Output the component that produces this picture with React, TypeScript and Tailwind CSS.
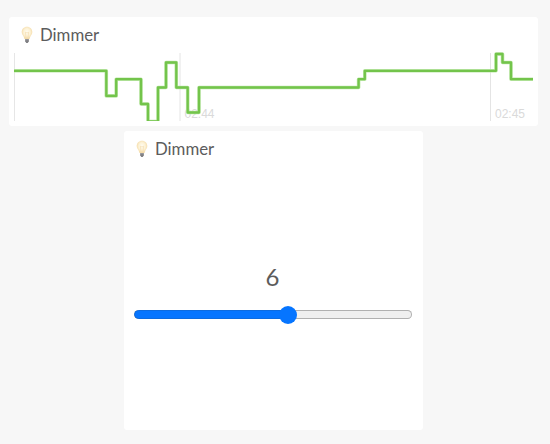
import { useState } from 'react'

// Step line of the dimmer level over time
const LEVEL_PATH =
  'M14 70.8H106.3V95.9H116.2V79.2H141V104H148V121.5H158V87.5H166V62.5H176.3V87.5H187.7V112.5H199V87.5H358.6V79.2H364.8V70.8H496V54H502.5V62.5H511V79.2H533'

const TICKS = [
  { x: 180, label: '02:44' },
  { x: 490.5, label: '02:45' },
]

function Bulb() {
  return (
    <svg className="h-[18px] w-[12px] shrink-0" viewBox="0 0 12 18">
      <defs>
        <radialGradient id="glow" cx="50%" cy="45%" r="55%">
          <stop offset="0" stopColor="#fffdf2" />
          <stop offset="0.55" stopColor="#fdf2d6" />
          <stop offset="1" stopColor="#f3d9a4" />
        </radialGradient>
      </defs>
      <path d="M6 .7C2.9.7.7 3 .7 5.9c0 2.3 1.4 3.4 2.1 5 .4.8.5 1.6.8 2.1h4.8c.3-.5.4-1.3.8-2.1.7-1.6 2.1-2.7 2.1-5C11.3 3 9.1.7 6 .7Z" fill="url(#glow)" />
      <path d="M4.4 6.2 5.2 12.5M7.6 6.2 6.8 12.5M4.4 6.2l.9.8.7-.8.7.8.9-.8" fill="none" stroke="#f3d9a8" strokeWidth="0.6" />
      <path d="M4.1 12.9h3.8v2.4L6.8 16.9H5.2l-1.1-1.6Z" fill="#a5a5a8" />
      <path d="M4.3 14.2h3.4M4.5 15.4h3M5.2 16.5h1.6" stroke="#68686d" strokeWidth="0.7" />
    </svg>
  )
}

function Title() {
  return (
    <div className="flex items-center gap-[7px]">
      <Bulb />
      <h2 className="text-[16.8px] leading-[22px] text-[#5c5c5c]">Dimmer</h2>
    </div>
  )
}

function Chart() {
  return (
    <svg className="block h-[72px] w-full" viewBox="9 51 529 72">
      <path d="M14.5 53V121" stroke="#e6e6e6" />
      {TICKS.map(t => (
        <g key={t.label}>
          <path d={`M${t.x} 53V121`} stroke="#e4e4e4" />
          <text x={t.x + 4.5} y="117.5" fontSize="12" fill="#dadada" fontFamily="Liberation Sans, Arial, sans-serif">
            {t.label}
          </text>
        </g>
      ))}
      <svg x="9" y="51" width="529" height="70" viewBox="9 51 529 70">
        <path d={LEVEL_PATH} fill="none" stroke="#bfe8ab" strokeWidth="3.6" strokeLinejoin="round" />
        <path d={LEVEL_PATH} fill="none" stroke="#73c44b" strokeWidth="2.3" strokeLinejoin="round" />
      </svg>
    </svg>
  )
}

export default function App() {
  const [level, setLevel] = useState(5.57)

  return (
    <main className="flex h-[444px] w-[550px] flex-col bg-[#f7f7f7] pt-[17px] font-['Lato',sans-serif]">
      {/* History */}
      <section className="ml-[9px] h-[109px] w-[529px] rounded-[3px] bg-white pt-[7px]">
        <div className="pl-[12px]">
          <Title />
        </div>
        <div className="mt-[5px]">
          <Chart />
        </div>
      </section>

      {/* Control */}
      <section className="mt-[5px] ml-[124px] flex h-[299px] w-[299px] flex-col rounded-[3px] bg-white pt-[7px]">
        <div className="pl-[12px]">
          <Title />
        </div>
        <div className="mt-[101px] pr-[2px] text-center text-[24px] leading-[32px] text-[#5c5c5c]">{Math.round(level)}</div>
        <div className="mr-[11px] ml-[10px] mt-[12px] grid h-[19px] items-center">
          <div className="col-start-1 row-start-1 h-[9px] overflow-hidden rounded-full bg-[#efefef] ring-1 ring-[#b0b0b0] ring-inset">
            <div className="h-[9px] rounded-l-full border border-[#0d6be0] bg-[#0675ff]" style={{ width: `${level * 10}%` }} />
          </div>
          <input
            type="range"
            min={0}
            max={10}
            step="any"
            value={level}
            onChange={e => setLevel(Number(e.target.value))}
            aria-label="Dimmer"
            className="col-start-1 row-start-1 m-0 h-[18px] w-full appearance-none bg-transparent outline-none
                       [&::-webkit-slider-thumb]:h-[18px] [&::-webkit-slider-thumb]:w-[18px]
                       [&::-webkit-slider-thumb]:appearance-none [&::-webkit-slider-thumb]:rounded-full
                       [&::-webkit-slider-thumb]:bg-[#0675ff]"
          />
        </div>
      </section>
    </main>
  )
}
